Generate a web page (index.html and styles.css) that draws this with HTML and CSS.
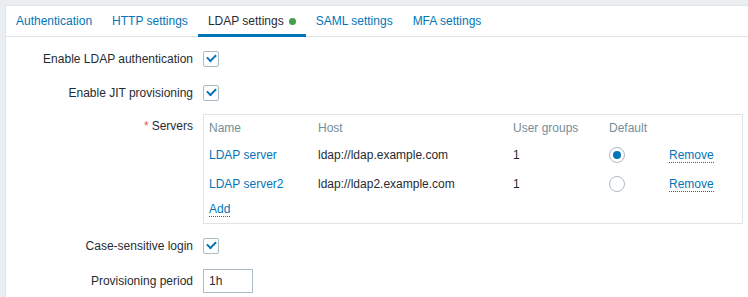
FILE: index.html
```html
<!DOCTYPE html>
<html lang="en">
  <head>
    <meta charset="UTF-8" />
    <title>Authentication - LDAP settings</title>
    <link rel="stylesheet" href="styles.css">
  </head>
  <body>
    <div class="panel">
      <ul class="tabs">
        <li class="tab"><a href="#">Authentication</a></li>
        <li class="tab"><a href="#">HTTP settings</a></li>
        <li class="tab tab-active"><a href="#">LDAP settings <span class="dot"></span></a></li>
        <li class="tab"><a href="#">SAML settings</a></li>
        <li class="tab"><a href="#">MFA settings</a></li>
      </ul>

      <div class="form">
        <div class="form-label">Enable LDAP authentication</div>
        <div class="form-field"><span class="checkbox checked"></span></div>

        <div class="form-label">Enable JIT provisioning</div>
        <div class="form-field"><span class="checkbox checked"></span></div>

        <div class="form-label label-top"><span class="req">*</span> Servers</div>
        <div class="form-field">
          <div class="servers">
            <table>
              <thead>
                <tr>
                  <th class="col-name">Name</th>
                  <th class="col-host">Host</th>
                  <th class="col-groups">User groups</th>
                  <th class="col-default">Default</th>
                  <th></th>
                </tr>
              </thead>
              <tbody>
                <tr>
                  <td><a href="#" class="link">LDAP server</a></td>
                  <td>ldap://ldap.example.com</td>
                  <td>1</td>
                  <td><span class="radio checked"></span></td>
                  <td><a href="#" class="link dotted">Remove</a></td>
                </tr>
                <tr>
                  <td><a href="#" class="link">LDAP server2</a></td>
                  <td>ldap://ldap2.example.com</td>
                  <td>1</td>
                  <td><span class="radio"></span></td>
                  <td><a href="#" class="link dotted">Remove</a></td>
                </tr>
              </tbody>
            </table>
            <div class="add-row"><a href="#" class="link dotted">Add</a></div>
          </div>
        </div>

        <div class="form-label">Case-sensitive login</div>
        <div class="form-field"><span class="checkbox checked"></span></div>

        <div class="form-label">Provisioning period</div>
        <div class="form-field"><input class="text-input" type="text" value="1h"></div>
      </div>
    </div>
  </body>
</html>
```

FILE: styles.css
```css
body {
  margin: 0;
  background-color: #ebeef0;
  font-family: "Liberation Sans", Arial, sans-serif;
  font-size: 12px;
  color: #1f2c33;
  overflow: hidden;
}
a {
  text-decoration: none;
}
.panel {
  margin: 5px -20px 0 5px;
  background-color: white;
  border: 1px solid #dfe4e7;
  border-bottom: none;
  height: 292px;
}
.tabs {
  display: flex;
  list-style: none;
  margin: 0;
  padding: 0;
  height: 30px;
  border-bottom: 1px solid #dfe4e7;
}
.tab {
  height: 28px;
  margin-bottom: -1px;
  border-bottom: 3px solid transparent;
}
.tab a {
  display: flex;
  align-items: center;
  box-sizing: border-box;
  height: 28px;
  padding: 1px 10px 0 10px;
  color: #0275b8;
}
.tab-active {
  border-bottom-color: #0275b8;
}
.tab-active a {
  color: #1f2c33;
}
.dot {
  display: inline-block;
  width: 7px;
  height: 7px;
  margin-left: 5px;
  margin-top: 2px;
  border-radius: 50%;
  background-color: #429e47;
}
.form {
  display: grid;
  grid-template-columns: 187px 1fr;
  column-gap: 10px;
  row-gap: 10px;
  padding-top: 10px;
}
.form-label {
  display: flex;
  align-items: center;
  justify-content: flex-end;
  min-height: 24px;
}
.label-top {
  align-items: flex-start;
  padding-top: 4px;
  min-height: 0;
}
.req {
  color: #e45959;
  margin-right: 3px;
}
.form-field {
  display: flex;
  align-items: center;
  min-height: 24px;
}
.checkbox {
  position: relative;
  box-sizing: border-box;
  width: 16px;
  height: 16px;
  border: 1px solid #acbbc2;
  border-radius: 2px;
  background-color: white;
}
.checkbox.checked::after {
  content: "";
  position: absolute;
  left: 3px;
  top: 2px;
  width: 7px;
  height: 4px;
  border-left: 2px solid #0275b8;
  border-bottom: 2px solid #0275b8;
  transform: rotate(-45deg);
}
.servers {
  box-sizing: border-box;
  width: 540px;
  margin-top: -1px;
  border: 1px solid #dfe4e7;
  padding: 0 5px 4px 5px;
}
table {
  border-collapse: collapse;
}
th {
  text-align: left;
  font-weight: normal;
  color: #768d99;
  height: 25px;
  padding: 0;
}
td {
  height: 29px;
  padding: 0;
}
.col-name { width: 109px; }
.col-host { width: 195px; }
.col-groups { width: 96px; }
.col-default { width: 60px; }
.link {
  color: #0275b8;
}
.dotted {
  border-bottom: 1px dotted #0275b8;
}
.radio {
  display: block;
  position: relative;
  box-sizing: border-box;
  width: 16px;
  height: 16px;
  border: 1px solid #acbbc2;
  border-radius: 50%;
}
.radio.checked::after {
  content: "";
  position: absolute;
  left: 3px;
  top: 3px;
  width: 8px;
  height: 8px;
  border-radius: 50%;
  background-color: #0275b8;
}
.add-row {
  box-sizing: border-box;
  height: 21px;
  padding-top: 2px;
  display: flex;
  align-items: center;
}
.text-input {
  box-sizing: border-box;
  width: 50px;
  height: 24px;
  margin: 1px 0 0 0;
  padding: 0 5px;
  border: 1px solid #acbbc2;
  font-family: inherit;
  font-size: 12px;
  color: #1f2c33;
  background-color: white;
}
```
